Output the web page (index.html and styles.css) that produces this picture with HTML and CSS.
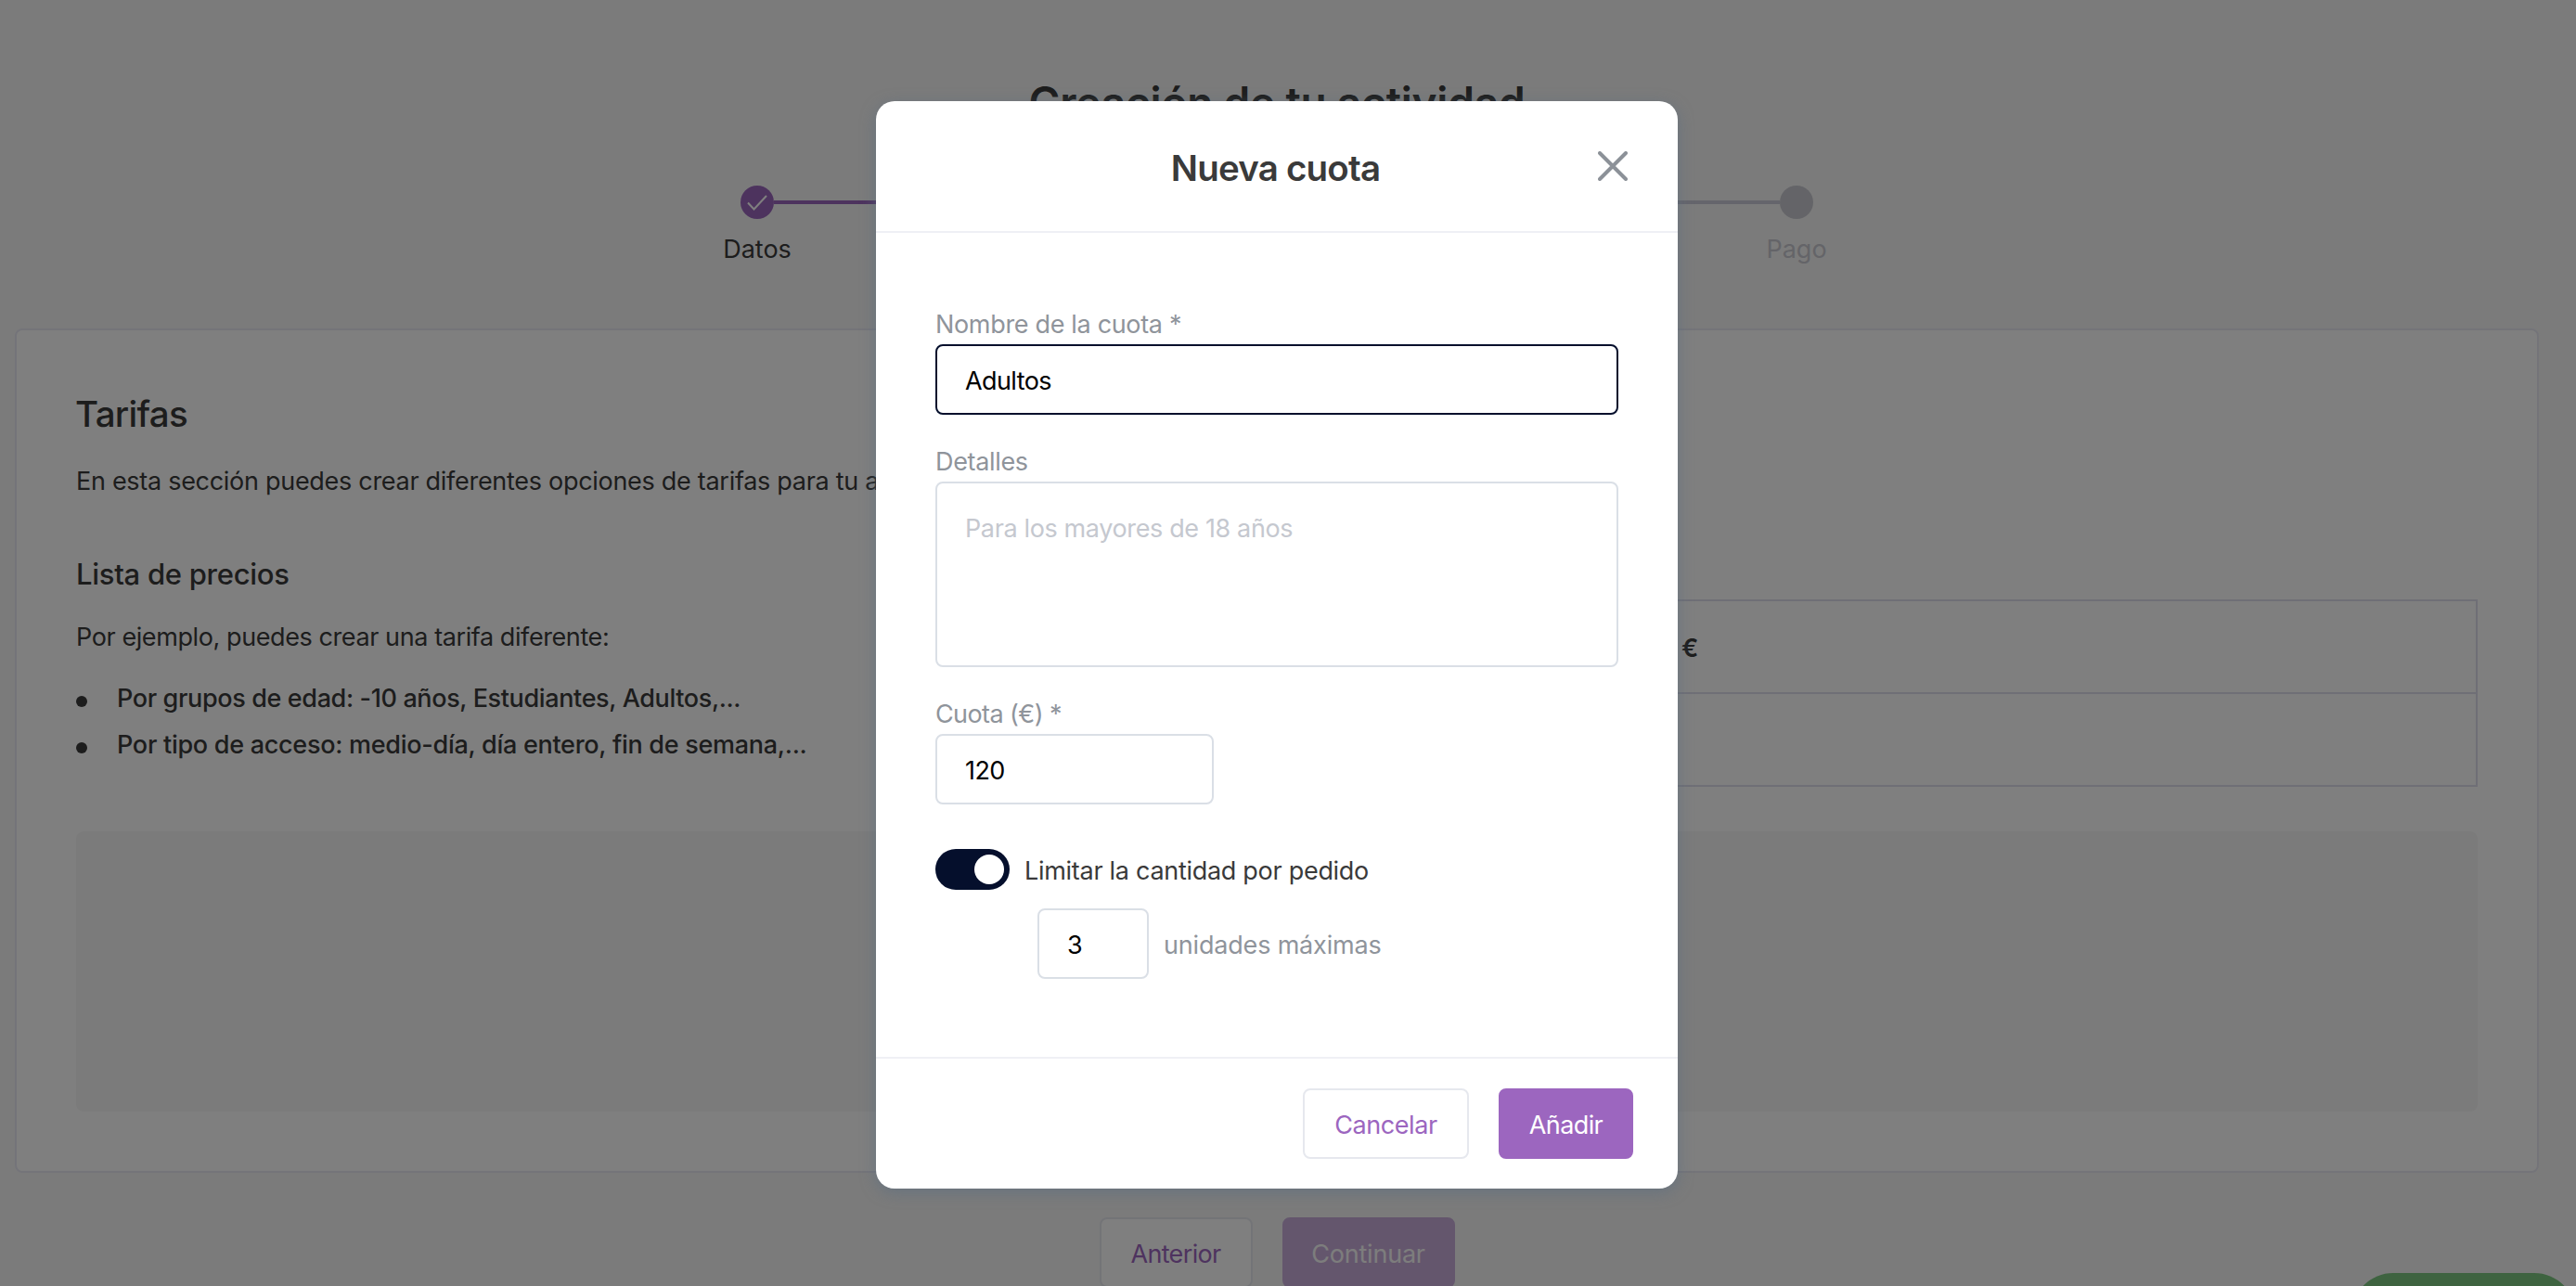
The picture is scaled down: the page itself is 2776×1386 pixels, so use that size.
FILE: index.html
```html
<!DOCTYPE html>
<html lang="es">
<head>
<meta charset="utf-8">
<title>Nueva cuota</title>
<link rel="stylesheet" href="styles.css">
</head>
<body>
<main class="page">
  <h1 class="page-title">Creación de tu actividad</h1>
  <div class="stepper">
    <div class="step">
      <span class="dot done"><svg width="36" height="36" viewBox="0 0 36 36"><path d="M8 18.5 L14.5 25.5 L28 11" fill="none" stroke="#fff" stroke-width="2"/></svg></span>
      <span class="step-label">Datos</span>
    </div>
    <span class="line done"></span>
    <span class="line"></span>
    <div class="step">
      <span class="dot"></span>
      <span class="step-label muted">Pago</span>
    </div>
  </div>

  <section class="card">
    <h2>Tarifas</h2>
    <p class="intro">En esta sección puedes crear diferentes opciones de tarifas para tu a</p>
    <div class="columns">
      <div>
        <h3>Lista de precios</h3>
        <p class="example">Por ejemplo, puedes crear una tarifa diferente:</p>
        <ul class="list">
          <li>Por grupos de edad: -10 años, Estudiantes, Adultos,...</li>
          <li class="wide">Por tipo de acceso: medio-día, día entero, fin de semana,...</li>
        </ul>
      </div>
      <div class="table">
        <div class="row">€</div>
        <div class="row"></div>
      </div>
    </div>
    <div class="panel"></div>
  </section>

  <div class="actions">
    <button class="btn anterior">Anterior</button>
    <button class="btn primary disabled">Continuar</button>
  </div>
</main>
<div class="help"></div>

<div class="overlay">
  <div class="modal">
    <header class="modal-head">
      <h2 class="modal-title">Nueva cuota</h2>
      <svg class="close" width="32" height="32" viewBox="0 0 32 32"><path d="M2 2 L30 30 M30 2 L2 30" fill="none" stroke="#8c9198" stroke-width="4" stroke-linecap="round"/></svg>
    </header>
    <div class="modal-body">
      <label class="label">Nombre de la cuota *</label>
      <input class="field focused" value="Adultos">
      <label class="label">Detalles</label>
      <textarea class="field area" placeholder="Para los mayores de 18 años"></textarea>
      <label class="label quota">Cuota (€) *</label>
      <input class="field price" value="120">
      <div class="limit">
        <span class="toggle"><span class="knob"></span></span>
        <span class="limit-text">Limitar la cantidad por pedido</span>
      </div>
      <div class="units">
        <input class="field amount" value="3">
        <span class="units-text">unidades máximas</span>
      </div>
    </div>
    <footer class="modal-foot">
      <button class="btn cancel">Cancelar</button>
      <button class="btn primary add">Añadir</button>
    </footer>
  </div>
</div>
</body>
</html>
```
FILE: styles.css
```css
* { box-sizing: border-box; margin: 0; padding: 0; }
html { overflow: hidden; }
body {
  position: relative;
  height: 1386px;
  overflow: hidden;
  background: #f7f7f7;
  color: #3a3a3a;
  font: 400 27px/40px Inter, "Liberation Sans", sans-serif;
  letter-spacing: -0.33px;
}
input, textarea, button { font: inherit; letter-spacing: inherit; }

.page { width: 2752px; height: 1386px; overflow: hidden; padding: 80px 16px 0; }
.page-title {
  text-align: center;
  font-size: 46px;
  font-weight: 560;
  line-height: 60px;
  letter-spacing: -0.2px;
}

.stepper { display: flex; width: 1156px; height: 88px; margin: 60px auto 66px; }
.step {
  display: flex;
  flex-direction: column;
  align-items: center;
  gap: 13px;
  width: 36px;
  letter-spacing: 0;
}
.dot { flex: none; width: 36px; height: 36px; border-radius: 50%; background: #c8c9d0; }
.dot.done, .line.done { background: #9b66bd; }
.dot svg { display: block; }
.step-label { white-space: nowrap; }
.muted { color: #c8c9d0; }
.line { flex: 1; height: 4px; margin-top: 16px; background: #cacad8; }

.card {
  padding: 64px;
  background: #fff;
  border: 2px solid #e8e8f3;
  border-radius: 8px;
}
.card h2 { margin-left: -1px; font-size: 38.5px; font-weight: 500; line-height: 52px; letter-spacing: -0.68px; }
.intro { margin-top: 27px; letter-spacing: -0.29px; }
.columns { display: grid; grid-template-columns: 1fr 1270px; margin-top: 59px; height: 250px; }
.card h3 { margin-top: 1px; font-size: 31px; font-weight: 500; line-height: 40px; letter-spacing: -0.28px; }
.example { margin-top: 28px; letter-spacing: -0.41px; }
.list { margin-top: 21px; list-style: none; }
.list li {
  display: flex;
  gap: 32px;
  line-height: 50px;
  font-weight: 500;
  letter-spacing: -0.37px;
  white-space: nowrap;
}
.list li::before {
  content: "";
  width: 12px;
  height: 12px;
  margin-top: 22px;
  border-radius: 50%;
  background: #3a3a3a;
}
.list .wide { letter-spacing: -0.28px; }
.table { margin-top: 48px; border: 2px solid #dfdfec; height: 202px; }
.row { height: 98px; padding: 31px 0 0 410px; font-weight: 600; }
.row + .row { height: 100px; border-top: 2px solid #dfdfec; }
.panel { height: 302px; margin-top: 48px; border-radius: 8px; background: #f7f7f7; }

.actions { display: flex; justify-content: center; gap: 32px; margin-top: 48px; }
.btn {
  height: 76px;
  padding-top: 4px;
  border: 2px solid #e6e8ee;
  border-radius: 8px;
  background: #fff;
  color: #9c66bf;
}
.btn.primary { border-color: #9c66bf; background: #9c66bf; color: #fff; }
.anterior { width: 165px; letter-spacing: -0.66px; }
.disabled { width: 186px; opacity: 0.5; letter-spacing: -0.2px; }

.help {
  position: absolute;
  left: 2534px;
  top: 1372px;
  width: 242px;
  height: 90px;
  border-radius: 45px;
  background: #7cc680;
}

.overlay { position: absolute; inset: 0; background: rgba(0, 0, 0, 0.5); }
.modal {
  width: 864px;
  margin: 109px 0 0 944px;
  background: #fff;
  border-radius: 20px;
  box-shadow: 0 4px 16px rgba(90, 110, 130, 0.6);
}
.modal-head {
  display: grid;
  grid-template-columns: 1fr auto 1fr;
  align-items: center;
  height: 142px;
  padding: 0 54px;
  border-bottom: 2px solid #eff0f5;
}
.modal-title {
  grid-column: 2;
  padding: 4px 3px 0 0;
  font-size: 38.5px;
  font-weight: 560;
  line-height: 52px;
  letter-spacing: -0.8px;
}
.close { justify-self: end; }
.modal-body { height: 888px; padding: 79px 64px 0; }
.label { display: block; margin-bottom: 1px; color: #8f949b; }
.quota { letter-spacing: -0.6px; }
.field {
  display: block;
  width: 736px;
  height: 76px;
  margin-bottom: 31px;
  padding: 2px 30px 0;
  border: 2px solid #dadfe6;
  border-radius: 8px;
  outline: none;
  background: #fff;
  color: #000;
  letter-spacing: -0.6px;
}
.focused { border-color: #050f2c; }
.area { height: 200px; padding-top: 29px; resize: none; letter-spacing: -0.37px; }
.area::placeholder { color: #c5c8cf; }
.price { width: 300px; margin-bottom: 48px; }
.limit { display: flex; align-items: center; gap: 16px; height: 44px; letter-spacing: -0.29px; }
.toggle {
  display: flex;
  justify-content: flex-end;
  width: 80px;
  height: 44px;
  padding: 6px;
  border-radius: 22px;
  background: #050f2c;
}
.knob { width: 32px; height: 32px; border-radius: 50%; background: #fff; }
.limit-text, .units-text { padding-top: 4px; }
.units { display: flex; align-items: center; gap: 16px; margin: 20px 0 0 110px; }
.amount { width: 120px; margin: 0; }
.units-text { color: #8f949b; letter-spacing: -0.18px; }
.modal-foot {
  display: flex;
  justify-content: flex-end;
  gap: 32px;
  height: 142px;
  padding: 32px 48px 0;
  border-top: 2px solid #eff0f5;
}
.cancel { width: 179px; letter-spacing: -0.44px; }
.add { width: 145px; letter-spacing: -0.6px; }
```
